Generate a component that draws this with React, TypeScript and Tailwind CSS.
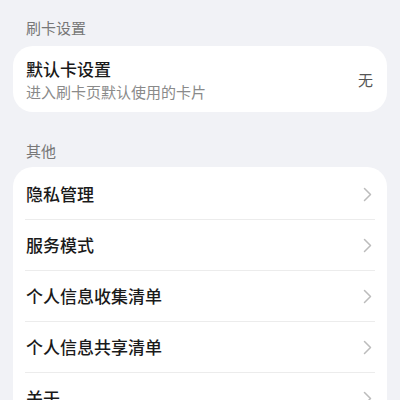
const font = { fontFamily: '"Noto Sans CJK SC", "Noto Sans", sans-serif' };

const items = ['隐私管理', '服务模式', '个人信息收集清单', '个人信息共享清单', '关于'];

function Chevron() {
    return (
        <svg width="9" height="15" viewBox="0 0 9 15" fill="none">
            <polyline
                points="1.5,1.5 7.5,7.5 1.5,13.5"
                stroke="#bcbcbc"
                strokeWidth="1.5"
                strokeLinecap="round"
                strokeLinejoin="round"
            />
        </svg>
    );
}

export default function App() {
    return (
        <div className="h-[400px] w-[400px] overflow-hidden bg-[#f1f2f6]" style={font}>
            <div className="px-[13px] pt-[18px]">
                {/* 刷卡设置 */}
                <div className="px-[13px] pb-[8px] text-[15px] leading-[20px] text-[#777777]">刷卡设置</div>
                <div className="flex items-center rounded-[20px] bg-white pt-[12px] pb-[10px] pl-[13px] pr-[14px]">
                    <div className="flex-1">
                        <div className="text-[17px] leading-[22px] font-medium text-[#1a1a1a]">默认卡设置</div>
                        <div className="mt-[2px] text-[15px] leading-[20px] text-[#8a8a8a]">进入刷卡页默认使用的卡片</div>
                    </div>
                    <span className="text-[15px] text-[#555555]">无</span>
                </div>

                {/* 其他 */}
                <div className="mt-[29px] px-[13px] pb-[6px] text-[15px] leading-[20px] text-[#777777]">其他</div>
                <div className="rounded-[20px] bg-white pt-[2px]">
                    {items.map((item, i) => (
                        <div key={item}>
                            <div className="flex h-[50px] items-center pl-[13px] pr-[15px]">
                                <span className="flex-1 text-[17px] font-medium text-[#1a1a1a]">{item}</span>
                                <Chevron />
                            </div>
                            {i < items.length - 1 && <div className="mx-[12px] h-px bg-[#ececec]" />}
                        </div>
                    ))}
                </div>
            </div>
        </div>
    );
}
